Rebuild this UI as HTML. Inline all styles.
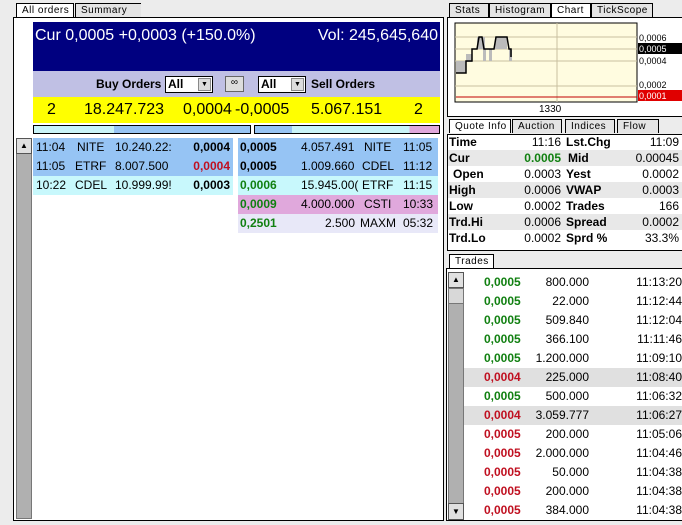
<!DOCTYPE html>
<html><head><style>
*{margin:0;padding:0;box-sizing:border-box}
body{width:682px;height:525px;background:#ececec;font-family:"Liberation Sans",sans-serif;position:relative;overflow:hidden;font-size:12px}
.a{position:absolute;white-space:nowrap}
.tab{position:absolute;height:14px;border:1px solid #000;border-bottom:none;background:#e4e4e4;font-size:10px;line-height:13px;padding-left:5px;letter-spacing:.5px}
.tab.s{background:#fff}
.r{position:absolute;height:19px;line-height:19px;font-size:12px}
.g{color:#118011}.rd{color:#c01020}
b{font-weight:bold}
</style></head><body>
<div class="tab s" style="left:16px;top:3px;width:58px">All orders</div>
<div class="tab" style="left:75px;top:3px;width:66px;border-right:none">Summary</div>
<div class="a" style="left:13px;top:17px;width:431px;height:504px;border:1px solid #000;background:#fff"></div>
<div class="a" style="left:33px;top:22px;width:407px;height:49px;background:#000080;color:#fff;font-size:16px;padding:5px 2px"><span>Cur 0,0005 +0,0003 (+150.0%)</span><span style="position:absolute;right:2px;top:5px">Vol: 245,645,640</span></div>
<div class="a" style="left:33px;top:71px;width:407px;height:26px;background:#c0c0e4"></div>
<div class="a" style="left:96px;top:77px;font-weight:bold;font-size:12px">Buy Orders</div>
<div class="a" style="left:165px;top:76px;width:48px;height:17px;background:#fff;border:1px solid #000;font-weight:bold;font-size:12px;padding-left:2px">All<span style="position:absolute;right:1px;top:1px;width:13px;height:13px;background:#ddd;border:1px solid #888;font-size:7px;text-align:center;line-height:12px">▼</span></div>
<div class="a" style="left:225px;top:76px;width:19px;height:16px;background:#ddd;border:1px solid #666;font-size:10px;text-align:center">∞</div>
<div class="a" style="left:258px;top:76px;width:48px;height:17px;background:#fff;border:1px solid #000;font-weight:bold;font-size:12px;padding-left:2px">All<span style="position:absolute;right:1px;top:1px;width:13px;height:13px;background:#ddd;border:1px solid #888;font-size:7px;text-align:center;line-height:12px">▼</span></div>
<div class="a" style="left:311px;top:77px;font-weight:bold;font-size:12px">Sell Orders</div>
<div class="a" style="left:33px;top:97px;width:407px;height:26px;background:#ffff00;font-size:16px;line-height:26px">
<span class="a" style="left:14px">2</span><span class="a" style="left:51px">18.247.723</span><span class="a" style="left:150px">0,0004</span><span class="a" style="left:202px">-0,0005</span><span class="a" style="left:278px">5.067.151</span><span class="a" style="left:381px">2</span></div>
<div class="a" style="left:33px;top:125px;width:218px;height:9px;border:1px solid #000;background:linear-gradient(90deg,#c8f4f8 0 37%,#96c4f4 37%)"></div>
<div class="a" style="left:254px;top:125px;width:186px;height:9px;border:1px solid #000;background:linear-gradient(90deg,#96c4f4 0 20%,#c8f4f8 20% 84%,#e0a8dc 84%)"></div>
<div class="a" style="left:16px;top:138px;width:16px;height:381px;background:#b0b0b0;border:1px solid #777"></div>
<div class="a" style="left:16px;top:138px;width:16px;height:16px;background:#e0e0e0;border:1px solid #555;font-size:8px;text-align:center;line-height:14px">▲</div>
<div class="r" style="left:33px;top:138px;width:200px;background:#96c4f4"><span class="a" style="left:3px">11:04</span><span class="a" style="left:44px">NITE</span><span class="a" style="left:82px">10.240.22:</span><b class="a" style="right:3px">0,0004</b></div>
<div class="r" style="left:33px;top:157px;width:200px;background:#96c4f4"><span class="a" style="left:3px">11:05</span><span class="a" style="left:42px">ETRF</span><span class="a" style="left:82px">8.007.500</span><b class="a rd" style="right:3px">0,0004</b></div>
<div class="r" style="left:33px;top:176px;width:200px;background:#c8f8fc"><span class="a" style="left:3px">10:22</span><span class="a" style="left:42px">CDEL</span><span class="a" style="left:82px">10.999.99!</span><b class="a" style="right:3px">0,0003</b></div>
<div class="r" style="left:238px;top:138px;width:200px;background:#96c4f4"><b class="a" style="left:2px">0,0005</b><span class="a" style="left:63px">4.057.491</span><span class="a" style="left:126px">NITE</span><span class="a" style="left:165px">11:05</span></div>
<div class="r" style="left:238px;top:157px;width:200px;background:#96c4f4"><b class="a" style="left:2px">0,0005</b><span class="a" style="left:63px">1.009.660</span><span class="a" style="left:124px">CDEL</span><span class="a" style="left:165px">11:12</span></div>
<div class="r" style="left:238px;top:176px;width:200px;background:#c8f8fc"><b class="a g" style="left:2px">0,0006</b><span class="a" style="left:63px">15.945.00(</span><span class="a" style="left:124px">ETRF</span><span class="a" style="left:165px">11:15</span></div>
<div class="r" style="left:238px;top:195px;width:200px;background:#e0a8dc"><b class="a g" style="left:2px">0,0009</b><span class="a" style="left:63px">4.000.000</span><span class="a" style="left:126px">CSTI</span><span class="a" style="left:165px">10:33</span></div>
<div class="r" style="left:238px;top:214px;width:200px;background:#e8e8f8"><b class="a g" style="left:2px">0,2501</b><span class="a" style="left:87px">2.500</span><span class="a" style="left:122px">MAXM</span><span class="a" style="left:165px">05:32</span></div>
<div class="tab" style="left:449px;top:3px;width:40px">Stats</div>
<div class="tab" style="left:489px;top:3px;width:62px">Histogram</div>
<div class="tab s" style="left:551px;top:3px;width:40px">Chart</div>
<div class="tab" style="left:591px;top:3px;width:62px">TickScope</div>
<div class="a" style="left:447px;top:17px;width:236px;height:100px;border:1px solid #000;background:#fff"></div>
<svg class="a" style="left:447px;top:17px" width="236" height="100">
<rect x="8" y="6" width="182" height="79" fill="#fffce0" stroke="#000"/>
<g stroke="#c8c0a0" stroke-width="1"><line x1="8" y1="20" x2="190" y2="20"/><line x1="8" y1="32" x2="190" y2="32"/><line x1="8" y1="44" x2="190" y2="44"/><line x1="8" y1="69" x2="190" y2="69"/><line x1="110" y1="6" x2="110" y2="85"/></g>
<line x1="9" y1="80" x2="190" y2="80" stroke="#c00000"/>
<rect x="9" y="44" width="10" height="12" fill="#bbb"/><rect x="19" y="37" width="6" height="8" fill="#bbb"/>
<rect x="30" y="20" width="8" height="12" fill="#bbb"/><rect x="48" y="20" width="12" height="12" fill="#bbb"/>
<rect x="36" y="32" width="3" height="12" fill="#bbb"/><rect x="42" y="32" width="3" height="12" fill="#bbb"/><rect x="62" y="32" width="3" height="12" fill="#bbb"/>
<polyline fill="none" stroke="#000" stroke-width="1.5" points="9,56 19,56 19,44 25,44 25,32 30,32 32,20 35,20 37,32 47,32 49,20 60,20 62,32 64,32 64,40"/>
<text x="92" y="95" font-size="10" font-family="Liberation Sans">1330</text>
<text x="192" y="24" font-size="9" font-family="Liberation Sans">0,0006</text>
<rect x="191" y="26" width="45" height="11" fill="#000"/><text x="192" y="35" font-size="9" fill="#fff" font-family="Liberation Sans">0,0005</text>
<text x="192" y="47" font-size="9" font-family="Liberation Sans">0,0004</text>
<text x="192" y="71" font-size="9" font-family="Liberation Sans">0,0002</text>
<rect x="191" y="73" width="45" height="11" fill="#e00000"/><text x="192" y="82" font-size="9" fill="#fff" font-family="Liberation Sans">0,0001</text>
</svg>
<div class="tab s" style="left:449px;top:119px;width:62px">Quote Info</div>
<div class="tab" style="left:512px;top:119px;width:50px">Auction</div>
<div class="tab" style="left:565px;top:119px;width:50px">Indices</div>
<div class="tab" style="left:617px;top:119px;width:42px">Flow</div>
<div class="a" style="left:447px;top:134px;width:236px;height:117px;border:1px solid #000;background:#fff"></div>
<div class="a" style="left:448px;top:134px;width:234px;font-size:12px;line-height:16px">
<div style="position:relative;height:16px"><b class="a" style="left:1px">Time</b><span class="a" style="right:121px">11:16</span><b class="a" style="left:118px">Lst.Chg</b><span class="a" style="right:3px">11:09</span></div>
<div style="position:relative;height:16px;background:#e8e8e8"><b class="a" style="left:1px">Cur</b><b class="a g" style="right:121px">0.0005</b><b class="a" style="left:120px">Mid</b><span class="a" style="right:3px">0.00045</span></div>
<div style="position:relative;height:16px"><b class="a" style="left:5px">Open</b><span class="a" style="right:121px">0.0003</span><b class="a" style="left:118px">Yest</b><span class="a" style="right:3px">0.0002</span></div>
<div style="position:relative;height:16px;background:#e8e8e8"><b class="a" style="left:1px">High</b><span class="a" style="right:121px">0.0006</span><b class="a" style="left:118px">VWAP</b><span class="a" style="right:3px">0.0003</span></div>
<div style="position:relative;height:16px"><b class="a" style="left:1px">Low</b><span class="a" style="right:121px">0.0002</span><b class="a" style="left:118px">Trades</b><span class="a" style="right:3px">166</span></div>
<div style="position:relative;height:16px;background:#e8e8e8"><b class="a" style="left:1px">Trd.Hi</b><span class="a" style="right:121px">0.0006</span><b class="a" style="left:118px">Spread</b><span class="a" style="right:3px">0.0002</span></div>
<div style="position:relative;height:16px"><b class="a" style="left:1px">Trd.Lo</b><span class="a" style="right:121px">0.0002</span><b class="a" style="left:118px">Sprd %</b><span class="a" style="right:3px">33.3%</span></div>
</div>
<div class="tab s" style="left:449px;top:254px;width:45px">Trades</div>
<div class="a" style="left:446px;top:268px;width:237px;height:253px;border:1px solid #000;background:#fff"></div>
<div class="a" style="left:448px;top:272px;width:16px;height:248px;background:#b0b0b0;border:1px solid #777"></div>
<div class="a" style="left:448px;top:272px;width:16px;height:16px;background:#e0e0e0;border:1px solid #555;font-size:8px;text-align:center;line-height:14px">▲</div>
<div class="a" style="left:448px;top:288px;width:16px;height:16px;background:#d8d8d8;border:1px solid #777"></div>
<div class="a" style="left:448px;top:503px;width:16px;height:17px;background:#e0e0e0;border:1px solid #555;font-size:8px;text-align:center;line-height:15px">▼</div>
<div class="a" style="left:464px;top:273px;width:218px">
<div class="r" style="position:relative;top:0"><b class="a g" style="left:20px">0,0005</b><span class="a" style="right:93px">800.000</span><span class="a" style="right:0">11:13:20</span></div>
<div class="r" style="position:relative;top:0"><b class="a g" style="left:20px">0,0005</b><span class="a" style="right:93px">22.000</span><span class="a" style="right:0">11:12:44</span></div>
<div class="r" style="position:relative;top:0"><b class="a g" style="left:20px">0,0005</b><span class="a" style="right:93px">509.840</span><span class="a" style="right:0">11:12:04</span></div>
<div class="r" style="position:relative;top:0"><b class="a g" style="left:20px">0,0005</b><span class="a" style="right:93px">366.100</span><span class="a" style="right:0">11:11:46</span></div>
<div class="r" style="position:relative;top:0"><b class="a g" style="left:20px">0,0005</b><span class="a" style="right:93px">1.200.000</span><span class="a" style="right:0">11:09:10</span></div>
<div class="r" style="position:relative;top:0;background:#e0e0e0"><b class="a rd" style="left:20px">0,0004</b><span class="a" style="right:93px">225.000</span><span class="a" style="right:0">11:08:40</span></div>
<div class="r" style="position:relative;top:0"><b class="a g" style="left:20px">0,0005</b><span class="a" style="right:93px">500.000</span><span class="a" style="right:0">11:06:32</span></div>
<div class="r" style="position:relative;top:0;background:#e0e0e0"><b class="a rd" style="left:20px">0,0004</b><span class="a" style="right:93px">3.059.777</span><span class="a" style="right:0">11:06:27</span></div>
<div class="r" style="position:relative;top:0"><b class="a rd" style="left:20px">0,0005</b><span class="a" style="right:93px">200.000</span><span class="a" style="right:0">11:05:06</span></div>
<div class="r" style="position:relative;top:0"><b class="a rd" style="left:20px">0,0005</b><span class="a" style="right:93px">2.000.000</span><span class="a" style="right:0">11:04:46</span></div>
<div class="r" style="position:relative;top:0"><b class="a rd" style="left:20px">0,0005</b><span class="a" style="right:93px">50.000</span><span class="a" style="right:0">11:04:38</span></div>
<div class="r" style="position:relative;top:0"><b class="a rd" style="left:20px">0,0005</b><span class="a" style="right:93px">200.000</span><span class="a" style="right:0">11:04:38</span></div>
<div class="r" style="position:relative;top:0"><b class="a rd" style="left:20px">0,0005</b><span class="a" style="right:93px">384.000</span><span class="a" style="right:0">11:04:38</span></div>
</div>
</body></html>
